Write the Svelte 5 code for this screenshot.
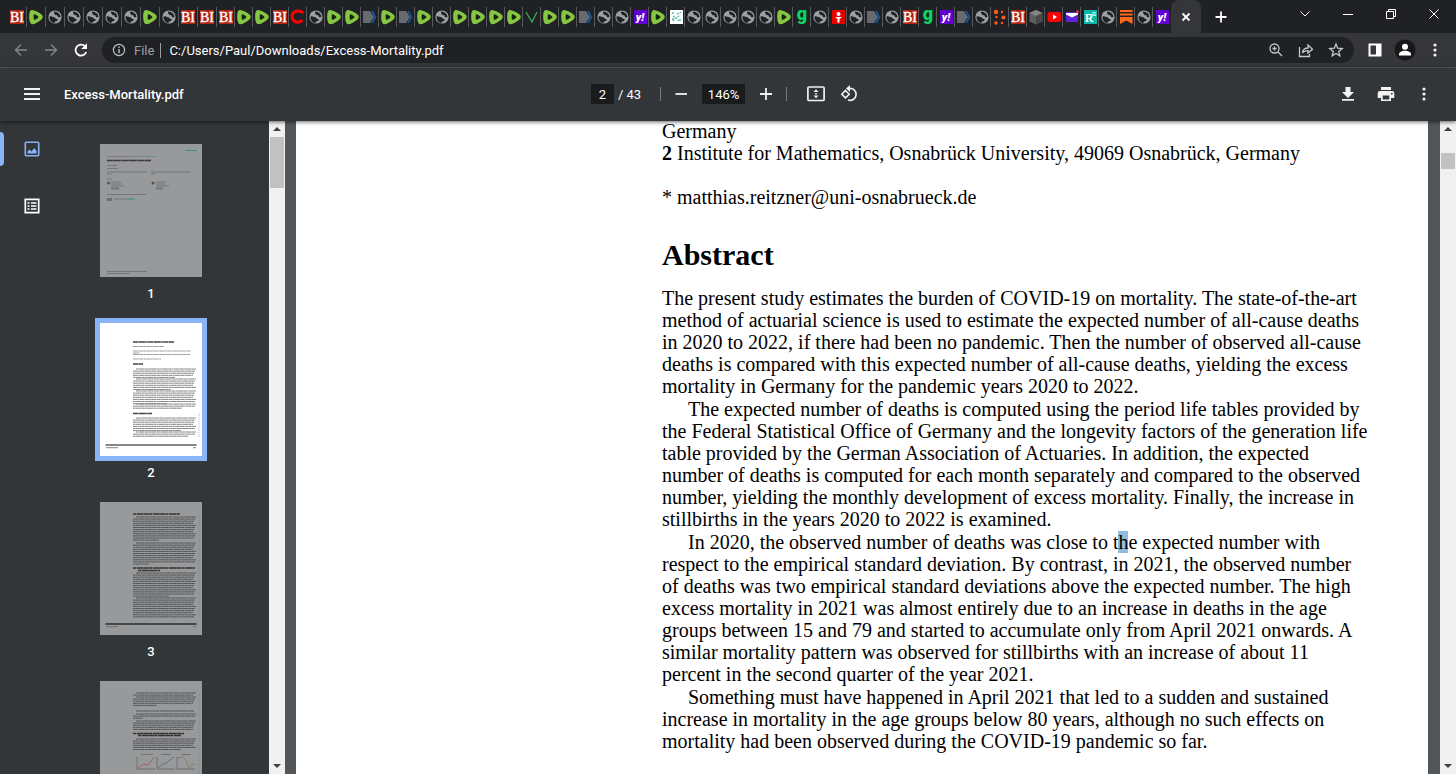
<script lang="ts">
	const names = {
		b: 'BI', r: 'Rumble', w: 'Website', c: 'Channel', p: 'Player', v: 'Vector', y: 'Yahoo',
		s: 'Science', g: 'Gab', t: 'Torch', d: 'Dots', k: 'Cube', u: 'YouTube', m: 'Mail',
		q: 'ResearchGate', o: 'Substack'
	};
	const tabs = 'brwwwwwrwbbbrrbcwrrprprwrrrrvrrpwwyrswwwwwrgwtwpwbgypwdbkumqwowy'.split('');

	const paragraphs = [
		[
			'The present study estimates the burden of COVID-19 on mortality. The state-of-the-art',
			'method of actuarial science is used to estimate the expected number of all-cause deaths',
			'in 2020 to 2022, if there had been no pandemic. Then the number of observed all-cause',
			'deaths is compared with this expected number of all-cause deaths, yielding the excess',
			'mortality in Germany for the pandemic years 2020 to 2022.'
		],
		[
			'The expected number of deaths is computed using the period life tables provided by',
			'the Federal Statistical Office of Germany and the longevity factors of the generation life',
			'table provided by the German Association of Actuaries. In addition, the expected',
			'number of deaths is computed for each month separately and compared to the observed',
			'number, yielding the monthly development of excess mortality. Finally, the increase in',
			'stillbirths in the years 2020 to 2022 is examined.'
		],
		[
			'In 2020, the observed number of deaths was close to t|h|e expected number with',
			'respect to the empirical standard deviation. By contrast, in 2021, the observed number',
			'of deaths was two empirical standard deviations above the expected number. The high',
			'excess mortality in 2021 was almost entirely due to an increase in deaths in the age',
			'groups between 15 and 79 and started to accumulate only from April 2021 onwards. A',
			'similar mortality pattern was observed for stillbirths with an increase of about 11',
			'percent in the second quarter of the year 2021.'
		],
		[
			'Something must have happened in April 2021 that led to a sudden and sustained',
			'increase in mortality in the age groups below 80 years, although no such effects on',
			'mortality had been observed during the COVID-19 pandemic so far.'
		]
	];

	// rows of tiny text on a thumbnail: [first y, number of rows, width of the last row]
	const blocks = {
		2: [[46, 5, 42], [56, 6, 38], [68, 7, 34], [81, 3, 49], [95, 7, 48], [109, 3, 55]],
		3: [[15, 12, 26], [41, 11, 16], [71, 12, 36], [96, 10, 61]],
		4: [[12, 2, 60], [16, 5, 24], [30, 1, 58], [33, 3, 10], [40, 5, 60], [58, 6, 48]]
	};

	function rows(page: number) {
		const out = [];
		for (const [y, n, last] of blocks[page] ?? []) {
			for (let i = 0; i < n; i++) {
				const indent = i === 0 ? 3 : 0;
				out.push({ x: 33 + indent, y: y + i * 2.1, w: i === n - 1 ? last : 63 - indent - ((i * 5) % 4) });
			}
		}
		return out;
	}

	let page = $state('2');
	let zoom = $state('146%');
	let address = $state('C:/Users/Paul/Downloads/Excess-Mortality.pdf');
</script>

{#snippet favicon(kind)}
	<svg class="favicon" viewBox="0 0 16 16" aria-hidden="true">
		{#if kind === 'b'}
			<rect x="1" y="1" width="14" height="14" fill="#b32412" />
			<text x="8" y="13" text-anchor="middle" font-family="Liberation Serif, serif" font-size="14" fill="#fff" stroke="#fff" stroke-width=".4">BI</text>
		{:else if kind === 'r'}
			<path d="M3 1.2C5.500 .2 13.500 4.800 14.400 6.500c.7 1.200.4 2.600-.5 3.500-2 2-6.500 5-9.500 5.300C2 15.500 1 10.500 1.200 7 1.300 3.500 1.800 1.800 3 1.200z" fill="#85c742" />
			<path d="M6 5.300c.6-.6 4.300 1.800 4.500 2.600.1.800-3.700 3.200-4.400 2.800-.5-.4-.6-4.800-.1-5.400z" fill="#18220f" />
		{:else if kind === 'w'}
			<circle cx="8" cy="8" r="6.600" fill="#9aa0a6" />
			<path d="M2.500 7.500c2-1 3.200.6 4.600.7 1.500.1 1.200 1.800 3 1.700 1.300 0 .2 2.300-1 2.300-1.500 0-1.300 1.500-2 1.800-2.500-.3-4.800-2.600-4.600-6.500zM7.200 2.600c-.8 1.600.5 2 1 3.200.5 1 2.500 0 2.600 1.600.1 1.200 1.600.9 2.700.7-.2-2.800-2.500-5.200-6.300-5.500z" fill="#202124" />
		{:else if kind === 'c'}
			<path d="M13.500 4C10.500 1 5 1.200 2.800 4.600c-2.200 3.700.6 8.400 4.800 8.600 2.400.1 3.600-.6 4.800-2.200" fill="none" stroke="#f00" stroke-width="3" />
		{:else if kind === 'p'}
			<path d="M1 2h7l4 6-4 6H1z" fill="#676a6f" />
			<path d="M10 2l3.500 6L10 14" fill="none" stroke="#125ca5" stroke-width="1.500" />
		{:else if kind === 'v'}
			<path d="M2 3l6 10 5-10" fill="none" stroke="#35b65d" stroke-width="1.200" />
		{:else if kind === 'y'}
			<rect x="2" y="1" width="13" height="14" fill="#6001d2" />
			<text x="8" y="12" text-anchor="middle" font-family="Roboto, sans-serif" font-size="11" font-style="italic" font-weight="900" fill="#fff">y!</text>
		{:else if kind === 's'}
			<rect x="2" y="1" width="13" height="14" fill="#fff" />
			<path d="M4 4h3m2 1 4-2M5 7l3 2 3 3m-6 0 3-3 4-3M4 10h2m5 1h2" stroke="#5bbca4" stroke-width="1.300" stroke-dasharray="2 1" fill="none" />
		{:else if kind === 'g'}
			<text x="8" y="11" text-anchor="middle" font-family="Roboto, sans-serif" font-size="18" font-weight="900" fill="#0bd565">g</text>
		{:else if kind === 't'}
			<rect x="2" y="1" width="13" height="14" fill="#e70000" />
			<circle cx="8.500" cy="5" r="2" fill="#fff" /><path d="M5 8h7l-2.500 2v3.500h-2V10z" fill="#fff" />
		{:else if kind === 'd'}
			<g fill="#ff5b16">
				<circle cx="4" cy="3" r="2.200" /><circle cx="10" cy="3" r="1.200" /><circle cx="4.500" cy="8" r="1.200" />
				<circle cx="11.500" cy="8.500" r="2" /><circle cx="4" cy="14" r="1.700" /><circle cx="10" cy="14" r="1.200" />
			</g>
		{:else if kind === 'k'}
			<path d="M8 1l6.500 3v8.500L8 15.500l-6.500-3V4z" fill="#5d5d5d" />
			<path d="M8 1l6.500 3L8 7 1.500 4z" fill="#858585" /><path d="M8 7l6.500-3v8.500L8 15.500z" fill="#484848" />
		{:else if kind === 'u'}
			<rect x="1.500" y="3" width="13.500" height="10" rx="2" fill="#f00" /><path d="M7 5.500v5L11 8z" fill="#fff" />
		{:else if kind === 'm'}
			<rect x="2" y="3" width="12" height="10" rx="1" fill="#6020dc" /><path d="M2 4h12v1.500L8 8.500 2 5.500z" fill="#fff" /><circle cx="13.500" cy="2.500" r="1.500" fill="#ef233c" />
		{:else if kind === 'q'}
			<rect x="2" y="1" width="13" height="14" fill="#08b8a5" />
			<text x="7" y="13" text-anchor="middle" font-family="Liberation Serif, serif" font-size="12" font-weight="700" fill="#fff">R</text>
			<text x="12" y="7" text-anchor="middle" font-family="Roboto, sans-serif" font-size="6" font-weight="700" fill="#fff">G</text>
		{:else}
			<path d="M2 1h12.500v2H2zm0 3.500h12.500v2H2zM2 8h12.500v7L8.300 11.500 2 15z" fill="#ff6719" />
		{/if}
	</svg>
{/snippet}

{#snippet thumb(n)}
	<svg class="sheet" viewBox="0 0 102 133" aria-hidden="true">
		<rect width="102" height="133" fill={n === 2 ? '#fff' : '#98999b'} />
		{#if n === 1}
			<g stroke="#5c5e60" stroke-width="1">
				<path d="M85 6.500h12" stroke="#389282" />
				<path d="M7 12.500h26" stroke-width=".5" /><path d="M33 12.500h23" stroke="#48797f" stroke-width=".5" />
				<path d="M7 16.500h44" stroke="#3a3b3d" stroke-width="1.300" stroke-dasharray="5 .3 8 .4 2 .3" />
				<path d="M7 21.500h10M7 24.500h11M7 28h40M7 30h5M51 28h40M51 30h4M7 35h5" stroke-width=".6" />
				<path d="M11 38h10M11 40h11M11 42h13M56 38h10M56 40h10M56 42h13M7 50.500h39M14 55h14M7 127.500h40M7 129.500h23" stroke-width=".6" />
				<path d="M28 55h7" stroke="#338b83" />
				<path d="M11 44.500h8M56 44.500h7" stroke-width="2" opacity=".6" />
				<path d="M7 55.500h5" stroke-width="3" opacity=".7" />
			</g>
			<circle cx="8.500" cy="39" r="1.500" fill="#555" /><circle cx="53" cy="39" r="1.500" fill="#555" />
		{:else}
			<g stroke={n === 2 ? '#858585' : '#525456'} fill="none">
				{#each rows(n) as row, i}
					<path d="M{row.x} {row.y}h{row.w}" stroke-width="1" stroke-dasharray={i % 2 ? '4 .3 2 .2 5 .3' : '2 .3 6 .3 3 .2'} />
				{/each}
			</g>
			{#if n === 2}
				<path d="M33 19h41M33 41h10M33 90.500h19" stroke="#444" stroke-width="1.300" stroke-dasharray="5 .4 7 .3 2 .4" />
				<path d="M33 23.500h31M33 28h58M33 30h7M33 31.500h57M33 36h28" stroke="#777" stroke-width=".7" stroke-dasharray="4 .3 2 .4" />
			{:else if n === 3}
				<path d="M33 12h47M33 66h62M38 68.500h22" stroke="#333" stroke-width="1.300" stroke-dasharray="3 .6 7 .3 5 .3" />
			{:else}
				<path d="M33 52.500h51M38 54.500h43" stroke="#333" stroke-width="1.300" stroke-dasharray="3 .6 7 .3 5 .3" />
				<path d="M37 76v12h18M57 76v12h18M77 76v12h18M41 73.500h12M61 73.500h10M82 73.500h9" stroke="#555" stroke-width=".6" fill="none" />
				<path d="M38 87l4-3 3-1 3 1 6-8" stroke="#a04848" stroke-width=".7" fill="none" />
				<path d="M58 87l5-4 3-1 8-6" stroke="#555b78" stroke-width=".7" fill="none" />
				<path d="M78 77l5-1 3 3 3 9 3-5 3 1" stroke="#817657" stroke-width=".7" fill="none" />
			{/if}
			{#if n < 4}
				<path d="M5.500 122h91" stroke={n === 2 ? '#111' : '#444648'} stroke-width={n === 2 ? 1.2 : 1.8} />
				<path d="M6 124.700h12M93 124.700h3" stroke="#666" stroke-width=".8" />
			{/if}
			<path d="M99 {n === 2 ? 90 : 12}V{n === 2 ? 115 : 117}" stroke="#777" stroke-width=".8" stroke-dasharray=".7 1.400" />
		{/if}
	</svg>
{/snippet}

{#snippet dots()}
	<svg width="16" height="16" viewBox="0 0 16 16" fill="currentColor" aria-hidden="true"><circle cx="8" cy="3" r="1.600" /><circle cx="8" cy="8" r="1.600" /><circle cx="8" cy="13" r="1.600" /></svg>
{/snippet}

{#snippet scrollbar(offset, size)}
	<div class="scrollbar">
		<svg width="16" height="16" viewBox="0 0 16 16" aria-hidden="true"><path d="M4 10l4-4 4 4z" /></svg>
		<div class="track"><div class="grip" style="margin-top: {offset}px; height: {size}px"></div></div>
		<svg width="16" height="16" viewBox="0 0 16 16" aria-hidden="true"><path d="M4 6h8l-4 4z" /></svg>
	</div>
{/snippet}

<div class="browser">
	<header class="tabstrip">
		<nav class="tabs" aria-label="Tabs">
			{#each tabs as kind, i}
				<button class="tab" class:wide={i < 11} class:last={i === tabs.length - 1} aria-label={names[kind]}>{@render favicon(kind)}</button>
			{/each}
			<button class="tab active" aria-label="Close tab"><svg width="12" height="12" viewBox="0 0 12 12"><path d="M2.500 2.500l7 7m0-7l-7 7" stroke="#fff" stroke-width="1.800" /></svg></button>
			<button class="new" aria-label="New tab"><svg width="14" height="14" viewBox="0 0 14 14"><path d="M7 1.500v11M1.500 7h11" stroke="#fff" stroke-width="1.800" /></svg></button>
		</nav>
		<div class="window">
			<button aria-label="Search tabs"><svg width="12" height="12" viewBox="0 0 12 12"><path d="M1.500 3.500L6 8l4.500-4.500" /></svg></button>
			<button aria-label="Minimize"><svg width="12" height="12" viewBox="0 0 12 12"><path d="M1 6.500h10" /></svg></button>
			<button aria-label="Restore"><svg width="12" height="12" viewBox="0 0 12 12"><path d="M1.500 3.500h7v7h-7zM3.500 3.500v-2h7v7h-2" /></svg></button>
			<button aria-label="Close"><svg width="12" height="12" viewBox="0 0 12 12"><path d="M1.500 1.500l9 9m0-9l-9 9" /></svg></button>
		</div>
	</header>

	<div class="addressbar">
		<button class="dim" aria-label="Back"><svg width="14" height="14" viewBox="0 0 14 14"><path d="M13 7H2m5-5.500L1.500 7 7 12.500" fill="none" stroke="currentColor" stroke-width="1.400" /></svg></button>
		<button class="dim" aria-label="Forward"><svg width="14" height="14" viewBox="0 0 14 14"><path d="M1 7h11M7 1.500L12.500 7 7 12.500" fill="none" stroke="currentColor" stroke-width="1.400" /></svg></button>
		<button aria-label="Reload"><svg width="16" height="16" viewBox="0 0 16 16"><path d="M13.200 10A5.500 5.500 0 1 1 12 4.200" fill="none" stroke="#fff" stroke-width="1.800" /><path d="M14 1.200V7H8.200z" fill="#fff" /></svg></button>
		<div class="omnibox">
			<svg width="14" height="14" viewBox="0 0 14 14" aria-hidden="true"><circle cx="7" cy="7" r="5.600" fill="none" stroke="#bdc1c6" stroke-width="1.200" /><path d="M7 6v4.200M7 3.600v1.400" stroke="#bdc1c6" stroke-width="1.400" /></svg>
			<span class="scheme">File</span>
			<input aria-label="Address" bind:value={address} />
			<button aria-label="Zoom"><svg width="16" height="16" viewBox="0 0 16 16"><circle cx="6.500" cy="6.500" r="4.500" /><path d="M10 10l4 4M4.500 6.500h4M6.500 4.500v4" /></svg></button>
			<button aria-label="Share"><svg width="16" height="16" viewBox="0 0 16 16"><path d="M1.500 5v9.500h10V12M4.500 11c.3-3.600 2.200-5 5.500-5V3l4.500 4.200L10 11V8.600c-2.600 0-4.200.4-5.500 2.400z" /></svg></button>
			<button aria-label="Bookmark"><svg width="16" height="16" viewBox="0 0 16 16"><path d="M8 2l1.700 4.200 4.500.3-3.500 2.900 1.200 4.400L8 11.400l-3.900 2.400 1.200-4.400-3.500-2.900 4.500-.3z" /></svg></button>
		</div>
		<button aria-label="Side panel"><svg width="14" height="14" viewBox="0 0 14 14"><path d="M.5.500h13v13H.5zM2.500 2.500v9h5.500v-9z" fill="#fff" fill-rule="evenodd" /></svg></button>
		<button class="avatar" aria-label="Profile"><svg width="22" height="22" viewBox="0 0 22 22"><circle cx="11" cy="11" r="10.500" fill="#171819" /><circle cx="11" cy="7.800" r="3" fill="#fff" /><path d="M5 16.500v-1.200c0-2.300 3-3.600 6-3.600s6 1.300 6 3.600v1.200z" fill="#fff" /></svg></button>
		<button aria-label="Browser menu">{@render dots()}</button>
	</div>

	<div class="pdfbar">
		<div class="title">
			<button aria-label="Menu"><svg width="16" height="12" viewBox="0 0 16 12"><path d="M0 1h16M0 6h16M0 11h16" stroke="#f1f1f1" stroke-width="1.800" /></svg></button>
			<strong>Excess-Mortality.pdf</strong>
		</div>
		<div class="controls">
			<input class="page-no" aria-label="Page number" bind:value={page} />
			<span class="total">/ 43</span>
			<i></i>
			<button aria-label="Zoom out"><svg width="14" height="14" viewBox="0 0 14 14"><path d="M1.500 7h11.500" stroke="#f1f1f1" stroke-width="1.800" /></svg></button>
			<input class="zoom" aria-label="Zoom level" bind:value={zoom} />
			<button aria-label="Zoom in"><svg width="14" height="14" viewBox="0 0 14 14"><path d="M1 7h12M7 1v12" stroke="#f1f1f1" stroke-width="1.800" /></svg></button>
			<i></i>
			<button class="fit" aria-label="Fit to page"><svg width="18" height="16" viewBox="0 0 18 16"><rect x=".9" y="1" width="16.200" height="13.500" rx="1" fill="none" stroke="#f1f1f1" stroke-width="1.700" /><path d="M6.500 6L9 3.300 11.500 6zM6.500 9.500h5L9 12.200zM8.200 7h1.600v1.500H8.200z" fill="#f1f1f1" /></svg></button>
			<button aria-label="Rotate"><svg width="18" height="18" viewBox="0 0 18 18"><path d="M9 3.500a6 6 0 1 1-1 11.500M5.500 5.500l3.700 3.700-3.700 3.700-3.700-3.700z" fill="none" stroke="#f1f1f1" stroke-width="1.600" /><path d="M10 0v7L6 3.500z" fill="#f1f1f1" /></svg></button>
		</div>
		<div class="actions">
			<button aria-label="Download"><svg width="14" height="16" viewBox="0 0 14 16"><path d="M4.500 1h5v5H13l-6 6-6-6h3.500zM1 13h12v1.800H1z" fill="#f1f1f1" /></svg></button>
			<button aria-label="Print"><svg width="18" height="16" viewBox="0 0 18 16"><path d="M4 1h10v3H4zM3 5h12a2.300 2.300 0 0 1 2.300 2.300V12H14v3H4v-3H.7V7.300A2.300 2.300 0 0 1 3 5zm2.700 4.500v4h6.600v-4zM14 7v1.600h1.600V7z" fill="#f1f1f1" fill-rule="evenodd" /></svg></button>
			<button aria-label="More actions">{@render dots()}</button>
		</div>
	</div>

	<div class="viewer">
		<aside>
			<div class="modes">
				<button class="selected" aria-label="Thumbnails"><svg width="16" height="16" viewBox="0 0 16 16"><rect x="1.300" y="1.300" width="13.400" height="13.400" rx="1" fill="none" stroke="#8ab4f8" stroke-width="1.600" /><path d="M3.500 12.500v-2l2-2 2 2L10.300 7l2.200 3v2.500z" fill="#8ab4f8" /></svg></button>
				<button aria-label="Outline"><svg width="16" height="16" viewBox="0 0 16 16"><path d="M1.300 1.300h13.400v13.400H1.300z" fill="none" stroke="#fff" stroke-width="1.700" /><path d="M3.500 5h2m1.500 0h5.500M3.500 8h2M7 8h5.500m-9 3h2M7 11h5.500" stroke="#fff" stroke-width="1.700" /></svg></button>
			</div>
			<div class="thumbs">
				{#each [1, 2, 3, 4] as n}
					<button class="thumb" class:current={n === 2} aria-label="Page {n}">
						{@render thumb(n)}
						{#if n < 4}<span>{n}</span>{/if}
					</button>
				{/each}
			</div>
			{@render scrollbar(0, 51)}
		</aside>
		<main>
			<article>
				<p class="line">Germany</p>
				<p class="line"><b>2</b> Institute for Mathematics, Osnabrück University, 49069 Osnabrück, Germany</p>
				<p class="line mail">* matthias.reitzner@uni-osnabrueck.de</p>
				<h1>Abstract</h1>
				{#each paragraphs as lines}
					<p class="text">
						{#each lines as line}
							<span class="line">{#each line.split('|') as part, i}{#if i === 1}<mark>{part}</mark>{:else}{part}{/if}{/each}</span>
						{/each}
					</p>
				{/each}
			</article>
		</main>
		{@render scrollbar(16, 16)}
	</div>
</div>

<style>
	:global(body) {
		margin: 0;
		overflow: hidden;
	}

	.browser {
		display: flex;
		flex-direction: column;
		height: 100vh;
		background: #525659;
		color: #fff;
		font-family: Roboto, sans-serif;
		font-size: 13px;
	}

	button {
		display: flex;
		flex: none;
		align-items: center;
		justify-content: center;
		padding: 0;
		border: 0;
		background: none;
		color: #f1f1f1;
		font: inherit;
	}

	input {
		box-sizing: border-box;
		min-width: 0;
		padding: 0;
		border: 0;
		color: #fff;
		font: inherit;
	}

	.tabstrip {
		display: flex;
		flex: none;
		justify-content: space-between;
		height: 33px;
		background: #202124;
	}

	.tabs {
		display: flex;
		align-items: center;
		padding-left: 8px;
	}

	.tab {
		box-sizing: border-box;
		width: 18px;
		height: 20px;
		border-right: 1px solid #56585c;
	}

	.tab.wide {
		width: 19px;
	}

	.tab.last {
		border-right-color: transparent;
	}

	.tab.active {
		align-self: stretch;
		width: 30px;
		height: auto;
		border: 0;
		border-radius: 8px 8px 0 0;
		background: #35363a;
	}

	.favicon {
		flex: none;
		width: 16px;
		height: 16px;
		overflow: visible;
	}

	.new {
		width: 40px;
		height: 32px;
	}

	.window {
		display: flex;
		height: 28px;
		padding-right: 1px;
	}

	.window button {
		width: 43px;
	}

	.window svg {
		fill: none;
		stroke: #fff;
		stroke-width: 1;
	}

	.addressbar {
		display: flex;
		flex: none;
		align-items: center;
		height: 34px;
		padding: 0 6px;
		border-bottom: 1px solid #5b5c5f;
		background: #35363a;
	}

	.addressbar > button {
		width: 30px;
		height: 28px;
	}

	.addressbar .dim {
		color: #85878a;
	}

	.omnibox {
		display: flex;
		flex: 1;
		align-items: center;
		height: 26px;
		margin: 0 6px;
		padding: 0 3px 0 10px;
		border-radius: 13px;
		background: #202124;
	}

	.omnibox input {
		flex: 1;
		background: none;
	}

	.omnibox button {
		width: 30px;
		height: 24px;
	}

	.omnibox button svg {
		fill: none;
		stroke: #c4c7cb;
		stroke-width: 1.3;
	}

	.scheme {
		margin: 0 8px;
		padding-right: 6px;
		border-right: 1px solid #9aa0a6;
		color: #9aa0a6;
		line-height: 15px;
	}

	.pdfbar {
		position: relative;
		display: grid;
		flex: none;
		grid-template-columns: 1fr auto 1fr;
		align-items: center;
		height: 52px;
		padding-bottom: 1px;
		background: #323639;
		box-shadow: 0 1px 4px rgba(0, 0, 0, 0.6);
	}

	.title,
	.controls,
	.actions {
		display: flex;
		align-items: center;
	}

	.title button {
		width: 64px;
		height: 32px;
	}

	.title strong {
		font-weight: 500;
	}

	.controls button {
		width: 32px;
		height: 32px;
	}

	.controls input {
		height: 20px;
		background: #191b1c;
		text-align: center;
	}

	.controls .page-no {
		width: 23px;
	}

	.controls .zoom {
		width: 43px;
		margin: 0 5px;
	}

	.total {
		margin: 0 15px 0 4px;
	}

	.controls i {
		width: 1px;
		height: 14px;
		margin: 0 4px;
		background: #77797b;
	}

	.controls .fit {
		width: 34px;
		margin-left: 8px;
	}

	.actions {
		justify-content: flex-end;
		padding-right: 13px;
	}

	.actions button {
		width: 38px;
		height: 32px;
	}

	.viewer {
		display: flex;
		flex: 1;
		min-height: 0;
	}

	aside {
		display: flex;
		flex: none;
		width: 285px;
		background: #323639;
	}

	.modes {
		display: flex;
		flex-direction: column;
		gap: 23px;
		width: 64px;
		padding-top: 11px;
	}

	.modes button {
		width: 64px;
		height: 34px;
	}

	.modes .selected::before {
		content: "";
		width: 4px;
		height: 34px;
		margin: 0 20px 0 0;
		border-radius: 0 4px 4px 0;
		background: #8ab4f8;
	}

	.modes .selected {
		justify-content: flex-start;
	}

	.thumbs {
		display: flex;
		flex: 1;
		flex-direction: column;
		padding: 18px 0 0 31px;
		overflow: hidden;
	}

	.thumb {
		flex-direction: column;
		width: 112px;
		height: 179px;
		justify-content: flex-start;
		color: #fff;
		font-weight: 500;
	}

	.sheet {
		flex: none;
		width: 102px;
		height: 133px;
		border: 5px solid transparent;
	}

	.current .sheet {
		border-color: #8ab4f8;
	}

	.thumb span {
		margin-top: 4px;
		line-height: 16px;
	}

	.scrollbar {
		display: flex;
		flex: none;
		flex-direction: column;
		width: 16px;
		background: #f1f1f1;
	}

	.scrollbar svg {
		flex: none;
		fill: #404040;
	}

	.track {
		flex: 1;
	}

	.grip {
		margin: 0 1px;
		background: #c1c1c1;
	}

	main {
		flex: 1;
		min-width: 0;
		padding: 0 12px 0 11px;
		overflow: hidden;
	}

	article {
		min-height: 100%;
		margin-top: -1px;
		padding: 0 0 24px 366px;
		background: #fff;
		color: #000;
		font-family: "Liberation Serif", serif;
		font-size: 20px;
		line-height: 22px;
	}

	article p {
		margin: 0;
	}

	.line {
		display: block;
		white-space: nowrap;
	}

	article .mail {
		margin-top: 22px;
	}

	h1 {
		margin: 29px 0 14px;
		font-size: 30px;
		line-height: 36px;
	}

	.text {
		text-indent: 26px;
	}

	.text .line + .line {
		text-indent: 0;
	}

	h1 + .text {
		text-indent: 0;
	}

	.text + .text {
		margin-top: 1px;
	}

	mark {
		background: #8fbbdc;
		color: inherit;
	}
</style>
